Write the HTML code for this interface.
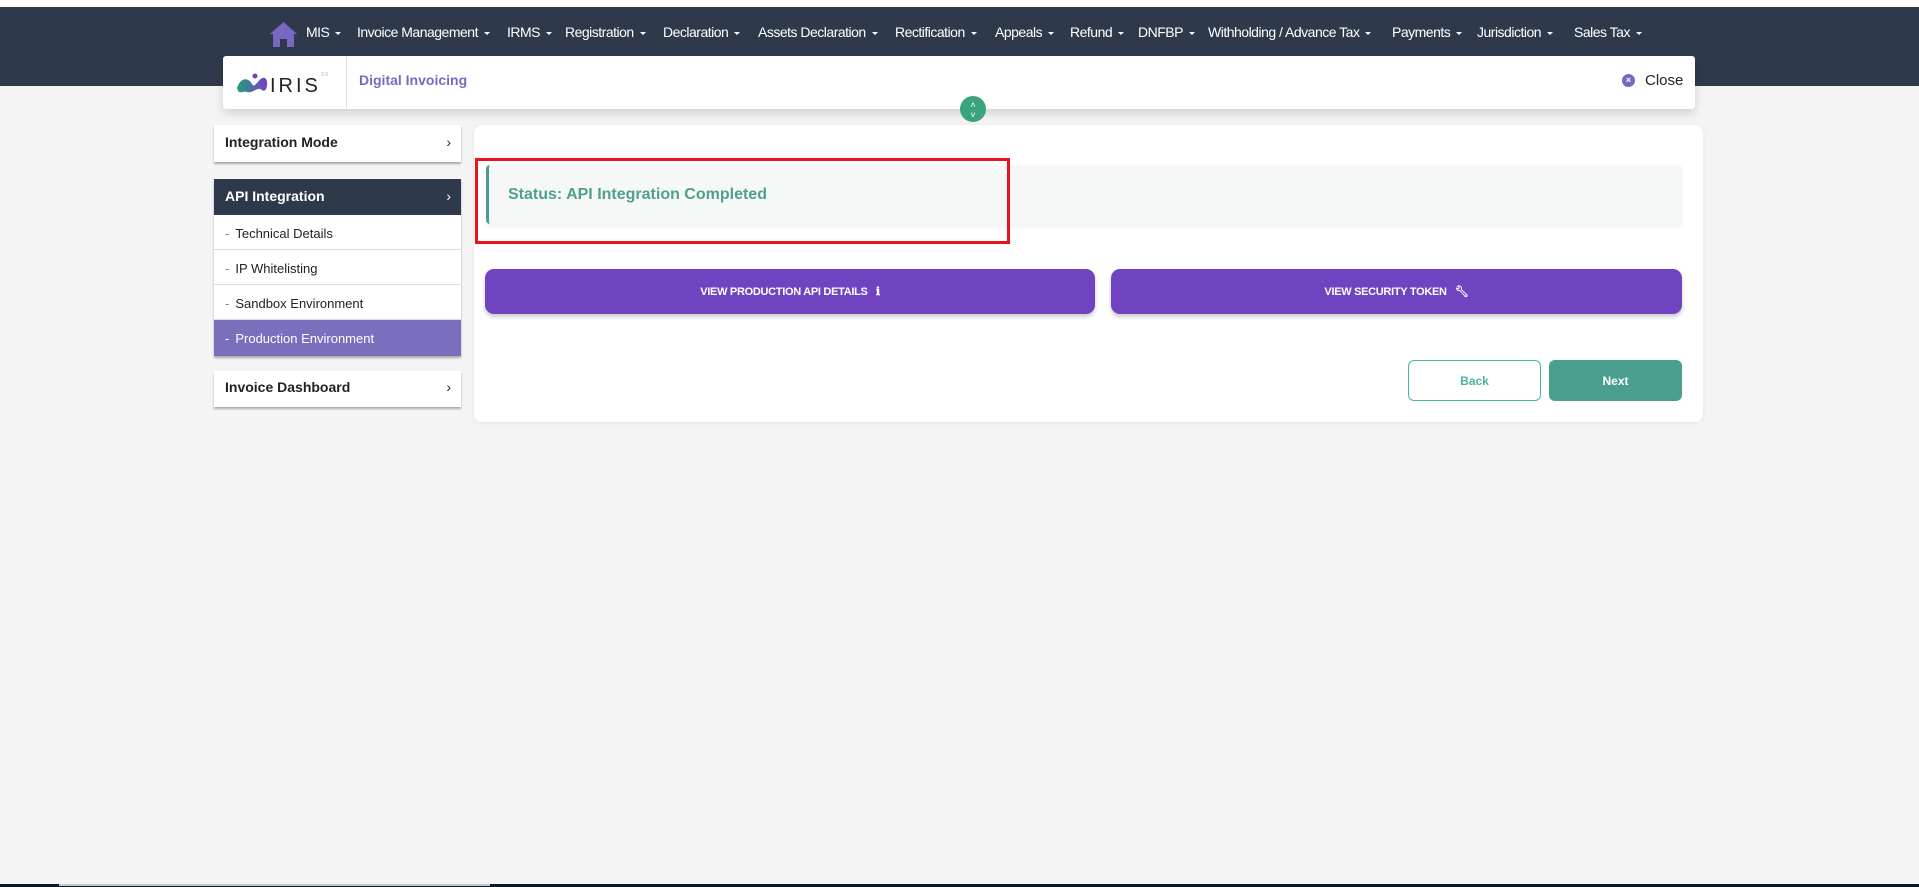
<!DOCTYPE html>
<html><head><meta charset="utf-8"><style>
*{box-sizing:border-box;margin:0;padding:0}
body{width:1919px;height:887px;background:#f4f4f4;font-family:"Liberation Sans",sans-serif;position:relative;overflow:hidden}
.top{position:absolute;left:0;top:0;width:1919px;height:7px;background:#fff}
.hdr{position:absolute;left:0;top:7px;width:1919px;height:79px;background:#2e3a4b}
.nav{position:absolute;top:24px;color:#fff;font-size:14px;letter-spacing:-0.5px;white-space:nowrap}
.nav:after{content:"";display:inline-block;margin-left:6px;vertical-align:middle;border-left:3px solid transparent;border-right:3px solid transparent;border-top:3px solid #fff}
.card{position:absolute;left:223px;top:56px;width:1472px;height:53px;background:#fff;border-radius:3px;box-shadow:0 4px 10px rgba(0,0,0,.15)}
.side{position:absolute;left:214px;width:247px;background:#fff;box-shadow:0 2px 2px rgba(0,0,0,.3);font-size:14px;color:#222}
.item{height:37px;line-height:35px;padding-left:11px;font-weight:bold;position:relative}
.item .ch{position:absolute;right:10px;top:0;font-weight:normal}
.sub{height:35px;line-height:37px;padding-left:11px;font-size:13px;border-bottom:1px solid #ddd;color:#222}
.sub span{color:#888;margin-right:6px}
.main{position:absolute;left:474px;top:125px;width:1229px;height:297px;background:#fff;border-radius:8px;box-shadow:0 1px 6px rgba(0,0,0,.06)}
.btn{position:absolute;top:269px;height:45px;background:#7044c0;border-radius:9px;color:#fff;font-size:11px;font-weight:bold;text-align:center;line-height:47px;box-shadow:0 3px 4px rgba(0,0,0,.2);letter-spacing:-0.3px}
</style></head><body>
<div class="top"></div>
<div class="hdr"></div>
<svg style="position:absolute;left:269px;top:21px" width="29" height="27" viewBox="0 0 29 27"><path d="M14.5 1 L1 13 L4 13 L4 26 L11 26 L11 18 L18 18 L18 26 L25 26 L25 13 L28 13 Z" fill="#7a68c0"/></svg>
<div class="nav" style="left:306px">MIS</div>
<div class="nav" style="left:357px">Invoice Management</div>
<div class="nav" style="left:507px">IRMS</div>
<div class="nav" style="left:565px">Registration</div>
<div class="nav" style="left:663px">Declaration</div>
<div class="nav" style="left:758px">Assets Declaration</div>
<div class="nav" style="left:895px">Rectification</div>
<div class="nav" style="left:995px">Appeals</div>
<div class="nav" style="left:1070px">Refund</div>
<div class="nav" style="left:1138px">DNFBP</div>
<div class="nav" style="left:1208px">Withholding / Advance Tax</div>
<div class="nav" style="left:1392px">Payments</div>
<div class="nav" style="left:1477px">Jurisdiction</div>
<div class="nav" style="left:1574px">Sales Tax</div>

<div class="card">
 <div style="position:absolute;left:123px;top:0;width:1px;height:53px;background:#e0e0e0"></div>
 <svg style="position:absolute;left:12px;top:12px" width="100" height="30" viewBox="0 0 100 30">
  <defs><linearGradient id="g" x1="0" x2="1"><stop offset="0" stop-color="#1fa07a"/><stop offset="1" stop-color="#7b3cc8"/></linearGradient></defs>
  <path d="M2 20 C6 8 14 10 17 16 C20 22 24 8 30 10 C34 12 32 26 27 22 C22 18 18 26 12 24 C8 22 4 28 2 20Z" fill="url(#g)"/>
  <circle cx="20" cy="8" r="2.5" fill="#7b3cc8"/>
  <text x="35" y="24" font-family="Liberation Sans" font-size="20" fill="#222" letter-spacing="3">IRIS</text>
  <text x="86" y="8" font-size="5" fill="#aaa">2.0</text>
 </svg>
 <div style="position:absolute;left:136px;top:16px;font-size:14px;font-weight:bold;color:#7a68c0">Digital Invoicing</div>
 <div style="position:absolute;left:1399px;top:18px;width:13px;height:13px;border-radius:50%;background:#7a68c0;color:#fff;font-size:9px;text-align:center;line-height:13px;font-weight:bold">×</div>
 <div style="position:absolute;left:1422px;top:16px;font-size:15px;color:#222">Close</div>
</div>
<div style="position:absolute;left:960px;top:96px;width:26px;height:26px;border-radius:50%;background:#3aa57c;color:#fff;font-size:9px;text-align:center;line-height:10px;padding-top:4px">˄<br>˅</div>

<div class="side" style="top:125px"><div class="item">Integration Mode<span class="ch">›</span></div></div>
<div class="side" style="top:179px">
 <div class="item" style="background:#2e3a4b;color:#fff;height:36px;line-height:34px">API Integration<span class="ch">›</span></div>
 <div class="sub"><span>-</span>Technical Details</div>
 <div class="sub"><span>-</span>IP Whitelisting</div>
 <div class="sub"><span>-</span>Sandbox Environment</div>
 <div class="sub" style="background:#7a6fbd;color:#fff;border:none;height:36px"><span style="color:#fff">-</span>Production Environment</div>
</div>
<div class="side" style="top:371px"><div class="item" style="height:36px;line-height:32px">Invoice Dashboard<span class="ch">›</span></div></div>

<div class="main"></div>
<div style="position:absolute;left:486px;top:165px;width:1196px;height:59px;background:#f5f8f7;border-left:3px solid #4a9e8e;border-radius:4px;box-shadow:0 3px 6px rgba(0,0,0,.05)"></div>
<div style="position:absolute;left:508px;top:186px;font-size:16px;font-weight:bold;color:#4fa08f">Status: API Integration Completed</div>
<div style="position:absolute;left:475px;top:158px;width:535px;height:86px;border:3px solid #e8141c"></div>

<div class="btn" style="left:485px;width:610px">VIEW PRODUCTION API DETAILS &nbsp;&nbsp;ℹ</div>
<div class="btn" style="left:1111px;width:571px">VIEW SECURITY TOKEN &nbsp;&nbsp;🔧︎</div>

<div style="position:absolute;left:1408px;top:360px;width:133px;height:41px;border:1px solid #4ab3a3;border-radius:6px;color:#4ab3a3;font-size:12px;font-weight:bold;text-align:center;line-height:41px">Back</div>
<div style="position:absolute;left:1549px;top:360px;width:133px;height:41px;background:#4a9e8e;border-radius:6px;color:#fff;font-size:12px;font-weight:bold;text-align:center;line-height:43px">Next</div>

<div style="position:absolute;left:0;top:884px;width:1919px;height:3px;background:#0b1a22"></div>
<div style="position:absolute;left:59px;top:884px;width:431px;height:2px;background:#c8c8c8"></div>
</body></html>
